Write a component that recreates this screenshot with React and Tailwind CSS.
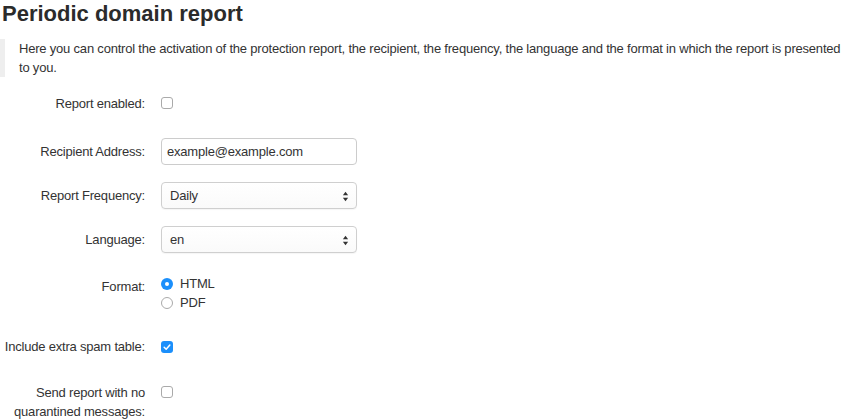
import { useState } from "react";

const Check = ({ checked }) =>
  checked ? (
    <span className="flex h-[12px] w-[12px] items-center justify-center rounded-[3px] bg-[#1b8ffb]">
      <svg viewBox="0 0 12 12" className="h-[10px] w-[10px]">
        <path d="M2.6 6.3 L5 8.6 L9.4 3.6" stroke="white" strokeWidth="1.8" fill="none" strokeLinecap="round" strokeLinejoin="round" />
      </svg>
    </span>
  ) : (
    <span className="block h-[12px] w-[12px] rounded-[3px] border border-[#aaaaaa] bg-white" />
  );

const Radio = ({ checked }) =>
  checked ? (
    <span className="flex h-[12px] w-[12px] items-center justify-center rounded-full bg-[#1b8ffb]">
      <span className="h-[4px] w-[4px] rounded-full bg-white" />
    </span>
  ) : (
    <span className="block h-[12px] w-[12px] rounded-full border border-[#aaaaaa] bg-white" />
  );

const Arrows = () => (
  <svg viewBox="0 0 8 12" className="pointer-events-none absolute right-[7px] top-[8px] h-[11px] w-[7px]">
    <path d="M4 0.5 L7 4.5 L1 4.5 Z" fill="#333" />
    <path d="M4 11.5 L7 7.5 L1 7.5 Z" fill="#333" />
  </svg>
);

const Label = ({ children, className = "" }) => (
  <div className={"w-[145px] shrink-0 text-right " + className}>{children}</div>
);

const SelectBox = ({ value }) => (
  <div className="relative ml-[16px] flex h-[27px] w-[196px] items-center rounded-[4px] border border-[#cfcfcf] bg-gradient-to-b from-white to-[#fafafa] pl-[8px] shadow-[0_1px_1px_rgba(0,0,0,0.04)]">
    <span>{value}</span>
    <Arrows />
  </div>
);

export default function App() {
  const [email, setEmail] = useState("example@example.com");

  return (
    <div className="min-h-[419px] w-[850px] bg-white text-[13px] leading-[19px] tracking-[-0.2px] text-[#333] [font-family:'Liberation_Sans',Arial,sans-serif]">
      <h1 className="pl-[2px] text-[22px] font-bold leading-[28px] tracking-normal text-[#2b2b2b]">
        Periodic domain report
      </h1>
      <blockquote className="mt-[11px] border-l-[5px] border-[#eeeeee] pl-[14px]">
        Here you can control the activation of the protection report, the recipient, the frequency, the language and the format in which the report is presented to you.
      </blockquote>

      <div className="mt-[13px] flex flex-col">
        <div className="flex h-[26px] items-center">
          <Label>Report enabled:</Label>
          <span className="ml-[16px]">
            <Check />
          </span>
        </div>

        <div className="mt-[22px] flex h-[27px] items-center">
          <Label>Recipient Address:</Label>
          <input
            className="ml-[16px] h-[27px] w-[196px] rounded-[4px] border border-[#cccccc] px-[5px] text-[13px] tracking-[-0.2px] text-[#333] outline-none"
            value={email}
            onChange={(e) => setEmail(e.target.value)}
          />
        </div>

        <div className="mt-[17px] flex h-[27px] items-center">
          <Label>Report Frequency:</Label>
          <SelectBox value="Daily" />
        </div>

        <div className="mt-[17px] flex h-[27px] items-center">
          <Label>Language:</Label>
          <SelectBox value="en" />
        </div>

        <div className="mt-[21px] flex items-start">
          <Label className="pt-[3px]">Format:</Label>
          <div className="ml-[16px] flex flex-col">
            <div className="flex h-[19px] items-center gap-[7px]">
              <Radio checked />
              <span>HTML</span>
            </div>
            <div className="flex h-[19px] items-center gap-[7px]">
              <Radio />
              <span>PDF</span>
            </div>
          </div>
        </div>

        <div className="mt-[25px] flex h-[19px] items-center">
          <Label>Include extra spam table:</Label>
          <span className="ml-[16px]">
            <Check checked />
          </span>
        </div>

        <div className="mt-[27px] flex items-start">
          <Label>Send report with no quarantined messages:</Label>
          <span className="ml-[16px] mt-[3px]">
            <Check />
          </span>
        </div>
      </div>
    </div>
  );
}
